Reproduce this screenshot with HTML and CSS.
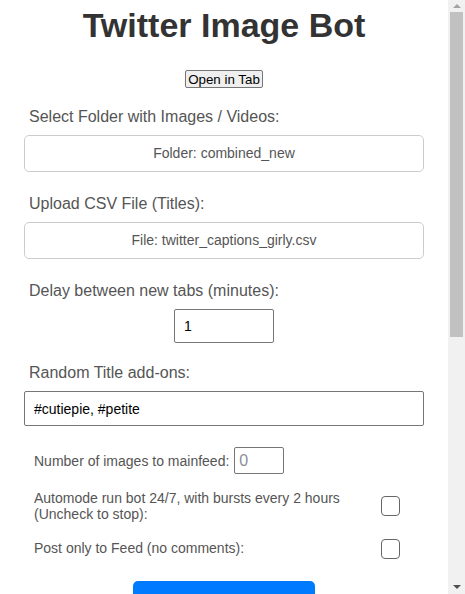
FILE: index.html
```html
<!DOCTYPE html>
<html>
<head>
    <title>Twitter Image Bot</title>
    <link rel="stylesheet" href="styles.css">
</head>
<body>
    <h1 class="title">Twitter Image Bot</h1>
    <div class="open-wrap"><button class="open-btn" type="button">Open in Tab</button></div>

    <main class="panel">
        <section class="field">
            <label class="field-label">Select Folder with Images / Videos:</label>
            <div class="pick-box">Folder: combined_new</div>
        </section>

        <section class="field">
            <label class="field-label">Upload CSV File (Titles):</label>
            <div class="pick-box">File: twitter_captions_girly.csv</div>
        </section>

        <section class="field field-delay">
            <label class="field-label">Delay between new tabs (minutes):</label>
            <div class="center-row"><input class="delay-input" type="number" value="1"></div>
        </section>

        <section class="field field-last">
            <label class="field-label">Random Title add-ons:</label>
            <input class="text-input" type="text" value="#cutiepie, #petite">
        </section>

        <div class="options">
            <div class="opt-row opt-inline">
                <label class="opt-label">Number of images to mainfeed:</label>
                <input class="feed-input" type="number" placeholder="0">
            </div>
            <div class="opt-row">
                <label class="opt-label opt-grow">Automode run bot 24/7, with bursts every 2 hours (Uncheck to stop):</label>
                <input class="check" type="checkbox">
            </div>
            <div class="opt-row opt-last">
                <label class="opt-label opt-grow">Post only to Feed (no comments):</label>
                <input class="check" type="checkbox">
            </div>
        </div>

        <div class="start-wrap"><button class="start-btn" type="button">Start Bot</button></div>
        <div class="log"></div>
    </main>

    <!-- window scrollbar, drawn since the shot hides the real one -->
    <div class="scrollbar">
        <span class="sb-arrow sb-up"></span>
        <span class="sb-thumb"></span>
        <span class="sb-fill"></span>
        <span class="sb-arrow sb-down"></span>
    </div>
</body>
</html>
```

FILE: styles.css
```css
body {
    margin: 0 17px 0 0;
    font-family: "Liberation Sans", Arial, sans-serif;
    background: #fff;
    color: #555;
}

.title {
    margin: 6px 0 0;
    font-size: 34px;
    line-height: 39px;
    text-align: center;
    color: #333;
}

.open-wrap {
    margin-top: 25px;
    display: flex;
    justify-content: center;
}
.open-btn {
    font-family: "Liberation Sans", Arial, sans-serif;
    font-size: 13.33px;
    line-height: 15px;
    padding: 1px 2px 0;
    color: #000;
    background: #efefef;
    border: 1px solid #767676;
    border-radius: 2px;
}

.panel {
    width: 400px;
    margin: 20px auto 0;
}

.field { margin-bottom: 23px; }
.field-delay { margin-bottom: 21px; }
.field-last { margin-bottom: 21px; }

.field-label {
    display: block;
    padding-left: 5px;
    margin-bottom: 9px;
    font-size: 16px;
    line-height: 18px;
    color: #555;
}

.pick-box {
    box-sizing: border-box;
    height: 37px;
    padding: 10px;
    font-size: 14px;
    line-height: 15px;
    text-align: center;
    color: #555;
    border: 1px solid #ccc;
    border-radius: 5px;
}

.center-row {
    display: flex;
    justify-content: center;
}
.delay-input {
    box-sizing: border-box;
    width: 100px;
    height: 34px;
    padding: 0 9px;
    font-family: "Liberation Sans", Arial, sans-serif;
    font-size: 14px;
    color: #000;
    border: 1px solid #767676;
    border-radius: 2px;
}

.text-input {
    box-sizing: border-box;
    width: 400px;
    height: 35px;
    padding: 0 9px;
    font-family: "Liberation Sans", Arial, sans-serif;
    font-size: 14px;
    color: #000;
    border: 1px solid #767676;
    border-radius: 2px;
}

input[type=number]::-webkit-inner-spin-button,
input[type=number]::-webkit-outer-spin-button { -webkit-appearance: none; margin: 0; }

.options {
    display: flex;
    flex-direction: column;
    gap: 16px;
    padding: 0 10px;
}
.opt-row {
    display: flex;
    align-items: center;
    gap: 22px;
}
.opt-inline { gap: 5px; }
.opt-last .check { margin-top: 1px; }
.opt-label {
    font-size: 14px;
    line-height: 16px;
    color: #555;
}
.opt-grow { flex: 1; }

.feed-input {
    box-sizing: border-box;
    width: 50px;
    height: 27px;
    padding: 0 4px;
    font-family: "Liberation Sans", Arial, sans-serif;
    font-size: 16px;
    border: 1px solid #767676;
    border-radius: 2px;
}
.feed-input::placeholder { color: #8a8f99; }

.check {
    -webkit-appearance: none;
    appearance: none;
    box-sizing: border-box;
    width: 19.5px;
    height: 19.5px;
    margin: 0 14px 0 0;
    border: 1.5px solid #666;
    border-radius: 4px;
    background: #fff;
}

.start-wrap {
    margin-top: 22px;
    display: flex;
    justify-content: center;
}
.start-btn {
    width: 182px;
    height: 48px;
    font-family: "Liberation Sans", Arial, sans-serif;
    font-size: 16px;
    color: #fff;
    background: #007bff;
    border: none;
    border-radius: 5px;
}

.log { height: 400px; }

.scrollbar {
    position: fixed;
    top: 0;
    right: 0;
    width: 17px;
    height: 100vh;
    background: #f1f1f1;
    display: flex;
    flex-direction: column;
    align-items: center;
}
.sb-arrow {
    width: 0;
    height: 0;
    border-left: 4px solid transparent;
    border-right: 4px solid transparent;
}
.sb-up {
    margin: 4px 0 4px;
    border-bottom: 4px solid #a3a3a3;
}
.sb-thumb {
    width: 13px;
    height: 325px;
    background: #c1c1c1;
}
.sb-fill { flex: 1; }
.sb-down {
    margin: 0 0 5px;
    border-top: 4px solid #505050;
}
```
